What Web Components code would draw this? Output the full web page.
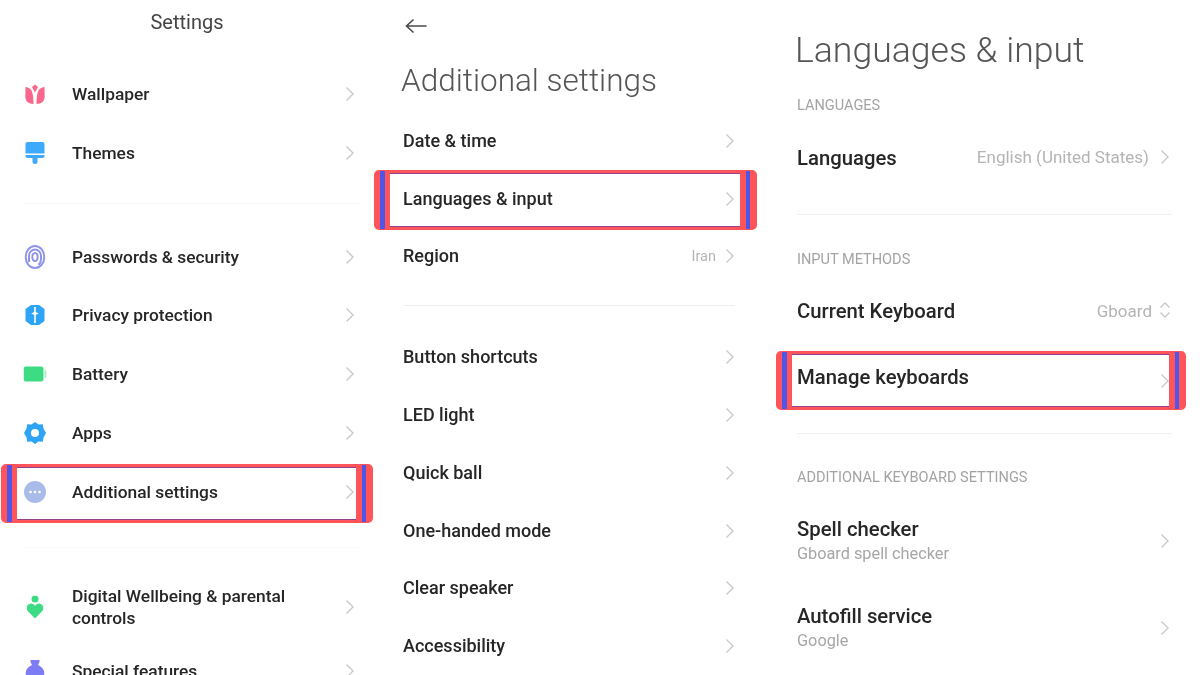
<!DOCTYPE html>
<html lang="en"><head><meta charset="utf-8"><title>Settings</title>
<style>
html,body{margin:0;background:#fff}
body{width:1200px;height:675px;overflow:hidden;font-family:Roboto,"Liberation Sans",sans-serif;color:#1f1f1f}
svg{display:block}
</style></head><body>
<set-page>
<set-panel style="--w:374px;--fs:17.350px">
  <panel-head kind="center">Settings</panel-head>
  <set-row h="58.800" tx="72" label="Wallpaper" ch="345" style="margin-top:20.600px"><svg slot="icon" width="21" height="21" viewBox="0 0 21 21"><path fill="#f9688c" d="M1 3.500c3.500.5 5.500 2 6.500 4.500 1.200 3.500 1.500 8 1.500 12.500-5 0-8.500-3-8.200-8zM20 3.500c-3.500.5-5.500 2-6.500 4.500-1.200 3.500-1.500 8-1.500 12.500 5 0 8.500-3 8.200-8zM10.500 1l3 2.500-3 5.500-3-5.500z"/></svg></set-row>
  <set-row h="58.800" tx="72" label="Themes" ch="345"><svg slot="icon" width="21" height="23" viewBox="0 0 21 23"><path fill="#3fa9fb" d="M3 .5h15a2 2 0 0 1 2 2v9.500H1V2.500a2 2 0 0 1 2-2zM1 13.500h19v1a2 2 0 0 1-2 2h-5v3.500a2.500 2.500 0 0 1-5 0v-3.500H3a2 2 0 0 1-2-2z"/></svg></set-row>
  <set-divider style="--mt:21px;--mb:23px;--ml:24px;--mr:14px;--c:#f8f8f8"></set-divider>
  <set-row h="58.800" tx="72" label="Passwords &amp; security" ch="345"><svg slot="icon" width="21" height="24" viewBox="0 0 21 24" fill="none" stroke="#8f93ea" stroke-width="2"><ellipse cx="10.500" cy="12" rx="9.300" ry="11"/><path d="M4.500 17V11a6 6.500 0 0 1 12 0v3c0 2.500-1 4.500-2.500 6"/><ellipse cx="10.500" cy="12" rx="2.700" ry="4"/></svg></set-row>
  <set-row h="58.800" tx="72" label="Privacy protection" ch="345"><svg slot="icon" width="21" height="22" viewBox="0 0 21 22"><path fill="#2ea4f6" d="M6.500 1h8l5.500 4v12l-5.500 4h-8L1 17V5z"/><path fill="#fff" d="M9.700 3h1.600v5l3 1.500-3 1.500v8H9.700v-8l-3-1.500 3-1.500z"/></svg></set-row>
  <set-row h="58.800" tx="72" label="Battery" ch="345"><svg slot="icon" width="23" height="16" viewBox="0 0 23 16"><rect x="0" y="0.500" width="20" height="15" rx="2.500" fill="#3ddc84"/><rect x="21" y="4" width="2" height="8" rx="1" fill="#a5ecc4"/></svg></set-row>
  <set-row h="58.800" tx="72" label="Apps" ch="345"><svg slot="icon" width="22" height="22" viewBox="0 0 22 22"><path fill="#2ea4f6" fill-rule="evenodd" d="M11 0l3.500 2.500 4.300-.2.700 4.200L22 11l-2.500 4.500-.7 4.200-4.300-.2L11 22l-3.500-2.500-4.300.2-.7-4.200L0 11l2.500-4.500.7-4.200 4.300.2zM11 7a4 4 0 1 0 0 8 4 4 0 0 0 0-8z"/></svg></set-row>
  <set-row h="58.800" tx="72" label="Additional settings" ch="345"><svg slot="icon" width="22" height="22" viewBox="0 0 22 22"><circle cx="11" cy="11" r="11" fill="#a9bbe9"/><circle cx="6.500" cy="11" r="1.300" fill="#fff"/><circle cx="11" cy="11" r="1.300" fill="#fff"/><circle cx="15.500" cy="11" r="1.300" fill="#fff"/></svg><hl-frame slot="over" style="left:1px;right:1px;top:1.600px;bottom:-1.800px"></hl-frame></set-row>
  <set-divider style="--mt:26px;--mb:0px;--ml:24px;--mr:14px;--c:#fbfbfb"></set-divider>
  <set-row h="62" tx="72" label="Digital Wellbeing &amp; parental controls" ch="345" wrap="250" style="margin-top:28px"><svg slot="icon" width="17" height="23" viewBox="0 0 17 23"><circle cx="8.500" cy="3.500" r="3.500" fill="#3ddc84"/><path fill="#3ddc84" d="M8.500 23L1.200 15.500C-1.500 12.500.8 8 4.300 8c2 0 3.400 1 4.200 2.300C9.300 9 10.700 8 12.700 8c3.500 0 5.800 4.500 3.100 7.500z"/></svg></set-row>
  <set-row h="59" tx="72" label="Special features" ch="345" style="margin-top:3px"><svg slot="icon" width="19" height="22" viewBox="0 0 19 22"><path fill="#7d7cf5" d="M5 0h9v2l-1.500 3c3.500 1.500 6.500 4.500 6.500 9 0 5-4 8-9.500 8S0 19 0 14c0-4.500 3-7.500 6.500-9L5 2z"/></svg></set-row>
</set-panel>
<set-panel style="--w:401px;--fs:18px;--vs:14.500px">
  <panel-head kind="large" back>Additional settings</panel-head>
  <set-row h="57.800" tx="29" label="Date &amp; time" ch="351" style="margin-top:3px"></set-row>
  <set-row h="57.800" tx="29" label="Languages &amp; input" ch="351"><hl-frame slot="over" style="left:0;right:18px;top:0;bottom:-2px"></hl-frame></set-row>
  <set-row h="57.800" tx="29" label="Region" value="Iran" vr="59" ch="351"></set-row>
  <set-divider style="--mt:20px;--mb:22px;--ml:29px;--mr:40px;--c:#efefef"></set-divider>
  <set-row h="57.800" tx="29" label="Button shortcuts" ch="351"></set-row>
  <set-row h="57.800" tx="29" label="LED light" ch="351"></set-row>
  <set-row h="57.800" tx="29" label="Quick ball" ch="351"></set-row>
  <set-row h="57.800" tx="29" label="One-handed mode" ch="351"></set-row>
  <set-row h="57.800" tx="29" label="Clear speaker" ch="351"></set-row>
  <set-row h="57.800" tx="29" label="Accessibility" ch="351"></set-row>
</set-panel>
<set-panel style="--w:425px;--fs:20.300px;--vs:17px">
  <panel-head kind="xl">Languages &amp; input</panel-head>
  <sec-label>LANGUAGES</sec-label>
  <set-row h="62" tx="22" label="Languages" value="English (United States)" vr="51" vlift="1" ch="385" style="margin-top:12px"></set-row>
  <set-divider style="--mt:25px;--mb:36px;--ml:22px;--mr:28px;--c:#f1f1f1"></set-divider>
  <sec-label>INPUT METHODS</sec-label>
  <set-row h="62" tx="22" label="Current Keyboard" value="Gboard" vr="48" updown ch="384" style="margin-top:11px"></set-row>
  <set-row h="59" tx="22" shift="-4" label="Manage keyboards" ch="385" style="margin-top:9px"><hl-frame slot="over" style="left:1px;right:14px;top:0;bottom:0"></hl-frame></set-row>
  <set-divider style="--mt:23px;--mb:35px;--ml:22px;--mr:28px;--c:#f1f1f1"></set-divider>
  <sec-label>ADDITIONAL KEYBOARD SETTINGS</sec-label>
  <set-row h="62" tx="22" label="Spell checker" sub="Gboard spell checker" ch="385" style="margin-top:23px"></set-row>
  <set-row h="62" tx="22" label="Autofill service" sub="Google" ch="385" style="margin-top:24.500px"></set-row>
</set-panel>
</set-page>
<script>
const tpl=(h)=>{const t=document.createElement('template');t.innerHTML=h;return t};
const def=(n,h,init)=>{const t=tpl(h);customElements.define(n,class extends HTMLElement{connectedCallback(){if(this.shadowRoot)return;this.attachShadow({mode:'open'}).append(t.content.cloneNode(true));init&&init(this,this.shadowRoot)}})};

def('set-page',`<style>:host{display:flex;width:1200px;height:675px;overflow:hidden;filter:blur(.4px)}</style><slot></slot>`);
def('set-panel',`<style>:host{display:flex;flex-direction:column;flex:none;width:var(--w);height:675px;overflow:hidden}</style><slot></slot>`);

def('panel-head',`<style>
:host{display:block;flex:none}
.center{height:44px;display:flex;align-items:center;justify-content:center;font:400 20px Roboto,sans-serif;color:#444}
.large{height:109px;padding-left:27px;display:flex;flex-direction:column;font:300 31.500px Roboto,sans-serif;color:#555}
.large svg{margin:16px 0 26px 4px;flex:none}
.xl{height:97px;padding-left:20px;padding-top:27px;box-sizing:border-box;font:300 35.600px/46px Roboto,sans-serif;color:#555}
</style><div id="b"><svg id="arrow" width="22" height="20" viewBox="0 0 22 20" fill="none" stroke="#4a4a4a" stroke-width="1.600"><path d="M21.500 10H1.500M8.500 3.500L1.500 10l7 6.500"/></svg><slot></slot></div>`,(el,s)=>{
  s.getElementById('b').className=el.getAttribute('kind');
  if(!el.hasAttribute('back'))s.getElementById('arrow').remove();
});

def('sec-label',`<style>:host{display:block;flex:none;margin-left:22px;font:400 14.550px/18px Roboto,sans-serif;color:#a3a3a3}</style><slot></slot>`);

def('set-divider',`<style>:host{display:block;flex:none;height:1px;margin:var(--mt) var(--mr) var(--mb) var(--ml);background:var(--c)}</style>`);

def('hl-frame',`<style>
:host{position:absolute;display:block;box-sizing:border-box;border:solid #ff545a;border-width:1px 7px 1px 6px;border-radius:5px;pointer-events:none}
.b{box-sizing:border-box;height:100%;border:solid #4f55e6;border-width:0 4px 0 5px}
.r{box-sizing:border-box;height:100%;border:solid #ff545a;border-width:2px 6px 2px 5px}
.l{box-sizing:border-box;height:100%;border-block:1.500px solid #92408a}
</style><div class="b"><div class="r"><div class="l"></div></div></div>`);

def('set-row',`<style>
:host{display:block;flex:none;position:relative}
.row{position:relative;height:100%;display:flex;align-items:center}
.ic{position:absolute;left:35px;top:50%;transform:translate(-50%,-50%);display:flex}
.t{display:flex;flex-direction:column;font:500 var(--fs,17px)/22px Roboto,sans-serif;color:#262626}
.sub{font:400 16.300px/20px Roboto,sans-serif;color:#a6a6a6;margin-top:4px}
.v{position:absolute;font:400 var(--vs,14px) Roboto,sans-serif;color:#b4b4b4;white-space:nowrap;top:50%;transform:translateY(-50%)}
.ch{position:absolute;top:50%;margin-top:-8px}
</style><div class="row"><div class="ic"><slot name="icon"></slot></div><div class="t"><span id="l"></span><span id="s" class="sub"></span></div><span id="v" class="v"></span>
<svg id="c" class="ch" width="10" height="16" viewBox="0 0 10 16" fill="none" stroke="#c9c9c9" stroke-width="1.400"><path d="M1.500 1.500L8 8l-6.500 6.500"/></svg></div><slot name="over"></slot>`,(el,s)=>{
  const a=n=>el.getAttribute(n);
  el.style.height=a('h')+'px';
  const t=s.querySelector('.t');
  t.style.marginLeft=a('tx')+'px';
  if(a('wrap'))t.style.width=a('wrap')+'px';
  if(a('shift'))t.style.marginTop=(2*a('shift'))+'px';
  s.getElementById('l').textContent=a('label');
  const sb=s.getElementById('s');if(a('sub'))sb.textContent=a('sub');else sb.remove();
  const c=s.getElementById('c');c.style.left=a('ch')+'px';
  const v=s.getElementById('v');
  if(a('value')){v.textContent=a('value');v.style.right=a('vr')+'px';if(a('vlift')){v.style.marginTop='-'+a('vlift')+'px';c.style.marginTop='-9px'}}else v.remove();
  if(el.hasAttribute('updown')){c.setAttribute('viewBox','0 0 12 18');c.setAttribute('width','12');c.setAttribute('height','18');c.style.marginTop='-10px';c.querySelector('path').setAttribute('d','M1.500 6.500L6 2l4.500 4.500M1.500 11.500L6 16l4.500-4.500')}
});
</script>
</body></html>
